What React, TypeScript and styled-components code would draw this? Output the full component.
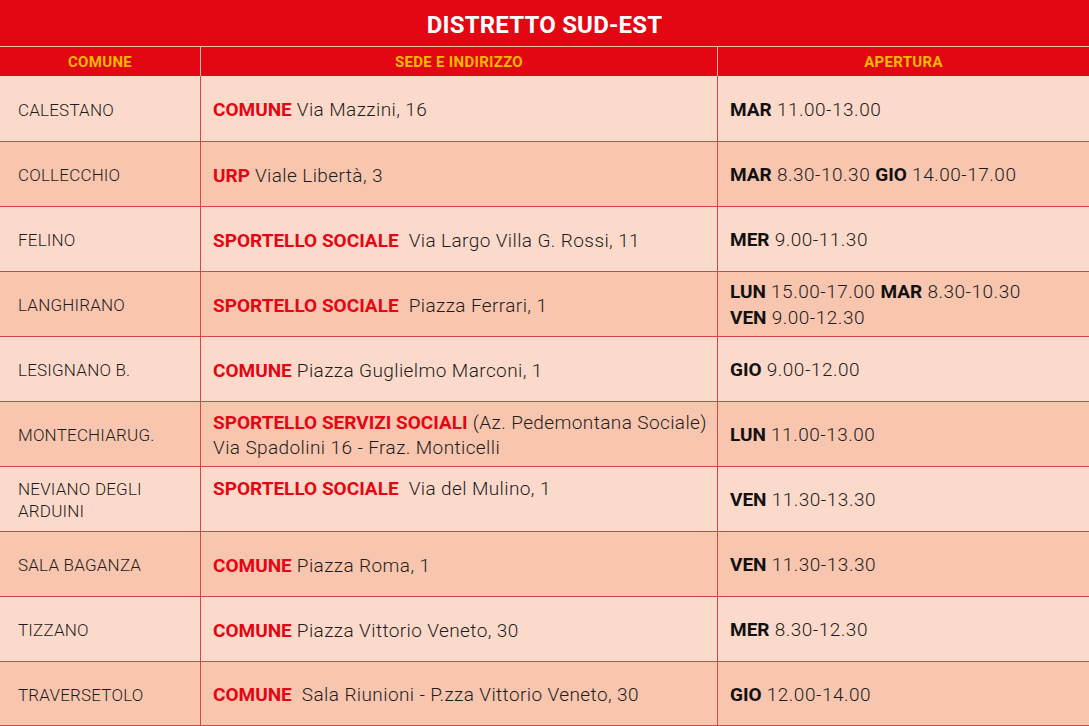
import styled, { createGlobalStyle } from 'styled-components';

const RED = '#e30613';
const YELLOW = '#f6b800';
const LINE = '#d2464b';
const TEXT = '#1d1d1b';

type Slot = { day: string; hours: string };

type Row = {
  comune: string;
  label: string;
  address: string;
  extra?: string;
  top?: boolean;
  slots: Slot[][];
};

const ROWS: Row[] = [
  { comune: 'CALESTANO', label: 'COMUNE', address: 'Via Mazzini, 16', slots: [[{ day: 'MAR', hours: '11.00-13.00' }]] },
  {
    comune: 'COLLECCHIO',
    label: 'URP',
    address: 'Viale Libertà, 3',
    slots: [[{ day: 'MAR', hours: '8.30-10.30' }, { day: 'GIO', hours: '14.00-17.00' }]],
  },
  { comune: 'FELINO', label: 'SPORTELLO SOCIALE', address: '\u00a0Via Largo Villa G. Rossi, 11', slots: [[{ day: 'MER', hours: '9.00-11.30' }]] },
  {
    comune: 'LANGHIRANO',
    label: 'SPORTELLO SOCIALE',
    address: '\u00a0Piazza Ferrari, 1',
    slots: [
      [{ day: 'LUN', hours: '15.00-17.00' }, { day: 'MAR', hours: '8.30-10.30' }],
      [{ day: 'VEN', hours: '9.00-12.30' }],
    ],
  },
  { comune: 'LESIGNANO B.', label: 'COMUNE', address: 'Piazza Guglielmo Marconi, 1', slots: [[{ day: 'GIO', hours: '9.00-12.00' }]] },
  {
    comune: 'MONTECHIARUG.',
    label: 'SPORTELLO SERVIZI SOCIALI',
    address: '(Az. Pedemontana Sociale)',
    extra: 'Via Spadolini 16 - Fraz. Monticelli',
    slots: [[{ day: 'LUN', hours: '11.00-13.00' }]],
  },
  {
    comune: 'NEVIANO DEGLI ARDUINI',
    label: 'SPORTELLO SOCIALE',
    address: '\u00a0Via del Mulino, 1',
    top: true,
    slots: [[{ day: 'VEN', hours: '11.30-13.30' }]],
  },
  { comune: 'SALA BAGANZA', label: 'COMUNE', address: 'Piazza Roma, 1', slots: [[{ day: 'VEN', hours: '11.30-13.30' }]] },
  { comune: 'TIZZANO', label: 'COMUNE', address: 'Piazza Vittorio Veneto, 30', slots: [[{ day: 'MER', hours: '8.30-12.30' }]] },
  {
    comune: 'TRAVERSETOLO',
    label: 'COMUNE',
    address: '\u00a0Sala Riunioni - P.zza Vittorio Veneto, 30',
    slots: [[{ day: 'GIO', hours: '12.00-14.00' }]],
  },
];

const GlobalStyle = createGlobalStyle`
  html, body {
    margin: 0;
    padding: 0;
    background: #ffffff;
  }
  body {
    font-family: Roboto, "Noto Sans", sans-serif;
    color: ${TEXT};
  }
`;

const StTable = styled.div`
  width: 1089px;
  display: flex;
  flex-direction: column;
`;

const StTitle = styled.div`
  height: 47px;
  background-color: ${RED};
  color: #ffffff;
  font-size: 24px;
  font-weight: 700;
  letter-spacing: 0.2px;
  display: flex;
  align-items: center;
  justify-content: center;
  padding-top: 3px;
  box-sizing: border-box;
  border-bottom: 1px solid #f3b8b5;
`;

const StGrid = styled.div`
  display: grid;
  grid-template-columns: 200px 1px 516px 1px 1fr;
`;

const StHeadRow = styled(StGrid)`
  height: 29px;
  background-color: ${RED};
`;

const StHeadCell = styled.div`
  display: flex;
  align-items: center;
  justify-content: center;
  padding-top: 1px;
  color: ${YELLOW};
  font-size: 15px;
  font-weight: 700;
  letter-spacing: 0.3px;
`;

const StDivider = styled.div<{ $light?: boolean }>`
  background-color: ${(p) => (p.$light ? '#f3b8b5' : LINE)};
`;

const StRow = styled(StGrid)<{ $dark: boolean }>`
  height: 64px;
  border-top: 1px solid ${LINE};
  background-color: ${(p) => (p.$dark ? '#f8c5af' : '#fcdacb')};
  &:first-of-type {
    height: 65px;
    border-top: none;
  }
  &:last-of-type {
    height: 63px;
    border-bottom: 1px solid ${LINE};
  }
`;

const StCell = styled.div<{ $top?: boolean }>`
  display: flex;
  flex-direction: column;
  justify-content: ${(p) => (p.$top ? 'flex-start' : 'center')};
  padding: ${(p) => (p.$top ? '9px 12px 0' : '2px 12px 0')};
  white-space: nowrap;
`;

const StComune = styled(StCell)`
  padding: 2px 16px 0 18px;
  font-size: 17px;
  font-weight: 300;
  letter-spacing: 0.2px;
  line-height: 22px;
  white-space: normal;
`;

const StAddress = styled(StCell)`
  font-size: 19px;
  line-height: 25px;
  font-weight: 300;
  letter-spacing: 0.4px;
`;

const StLabel = styled.strong`
  color: ${RED};
  font-weight: 700;
  letter-spacing: 0;
`;

const StHours = styled(StCell)`
  font-size: 19px;
  line-height: 26px;
  font-weight: 300;
  letter-spacing: 0.5px;
`;

const StDay = styled.strong`
  font-weight: 700;
  color: #111111;
  letter-spacing: 0;
`;

const StBody = styled.div`
  display: flex;
  flex-direction: column;
`;

function App() {
  return (
    <>
      <GlobalStyle />
      <StTable>
        <StTitle>DISTRETTO SUD-EST</StTitle>
        <StHeadRow>
          <StHeadCell>COMUNE</StHeadCell>
          <StDivider $light />
          <StHeadCell>SEDE E INDIRIZZO</StHeadCell>
          <StDivider $light />
          <StHeadCell>APERTURA</StHeadCell>
        </StHeadRow>
        <StBody>
          {ROWS.map((row, i) => (
            <StRow key={row.comune} $dark={i % 2 === 1}>
              <StComune>{row.comune}</StComune>
              <StDivider />
              <StAddress $top={row.top}>
                <div>
                  <StLabel>{row.label}</StLabel> {row.address}
                </div>
                {row.extra && <div>{row.extra}</div>}
              </StAddress>
              <StDivider />
              <StHours>
                {row.slots.map((line, j) => (
                  <div key={j}>
                    {line.map((s, k) => (
                      <span key={k}>
                        {k > 0 && ' '}
                        <StDay>{s.day}</StDay> {s.hours}
                      </span>
                    ))}
                  </div>
                ))}
              </StHours>
            </StRow>
          ))}
        </StBody>
      </StTable>
    </>
  );
}

export default App;
